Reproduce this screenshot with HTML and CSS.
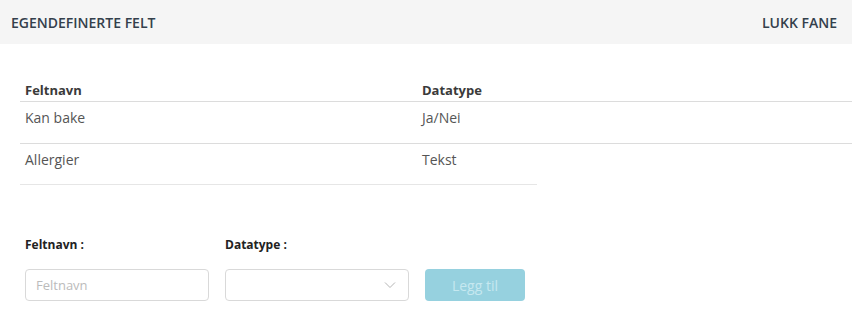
FILE: index.html
```html
<!DOCTYPE html>
<html lang="no">
<head>
  <meta charset="UTF-8" />
  <title>Egendefinerte felt</title>
  <link rel="stylesheet" href="styles.css">
</head>
<body>

<header class="tab-header">
  <div class="tab-title">EGENDEFINERTE FELT</div>
  <a class="close-tab" href="#">LUKK FANE</a>
</header>

<section class="field-table">
  <div class="row head">
    <div class="cell name">Feltnavn</div>
    <div class="cell type">Datatype</div>
  </div>
  <div class="row">
    <div class="cell name">Kan bake</div>
    <div class="cell type">Ja/Nei</div>
  </div>
  <div class="row last">
    <div class="cell name">Allergier</div>
    <div class="cell type">Tekst</div>
  </div>
  <div class="table-end"></div>
</section>

<!-- New field -->
<form class="new-field" onsubmit="return false">
  <div class="form-group">
    <label for="fieldName">Feltnavn :</label>
    <input type="text" id="fieldName" placeholder="Feltnavn" />
  </div>
  <div class="form-group">
    <label for="fieldType">Datatype :</label>
    <div class="select-wrap">
      <select id="fieldType">
        <option></option>
        <option>Tekst</option>
        <option>Ja/Nei</option>
      </select>
      <svg class="chevron" width="12" height="8" viewBox="0 0 12 8"><path d="M1 1.5 L6 6.5 L11 1.5" fill="none" stroke="#b5b5b5" stroke-width="1"/></svg>
    </div>
  </div>
  <div class="form-group">
    <button type="submit" disabled>Legg til</button>
  </div>
</form>

</body>
</html>
```

FILE: styles.css
```css
* {
  box-sizing: border-box;
}

body {
  margin: 0;
  font-family: 'Open Sans', sans-serif;
  background: #fff;
  color: #555;
}

.tab-header {
  height: 44px;
  background: #f5f5f5;
  display: flex;
  justify-content: space-between;
  align-items: center;
  padding: 0 15px 0 11px;
}

.tab-title,
.close-tab {
  font-size: 14px;
  font-weight: 600;
  color: #34404c;
  text-decoration: none;
}

.field-table {
  margin: 38px 0 0 20px;
}

.row {
  display: flex;
  border-bottom: 1px solid #dcdcdc;
  height: 42px;
  padding: 6px 0 0 5px;
  font-size: 14px;
  line-height: 20px;
}

.row.head {
  height: 20px;
  padding-top: 0;
  font-size: 13px;
  font-weight: 700;
  color: #3a3a3a;
  line-height: 17px;
}

.row.last {
  border-bottom: none;
  height: 40px;
}

.cell.name {
  width: 397px;
}

.table-end {
  width: 517px;
  border-top: 1px solid #e6e6e6;
}

.new-field {
  display: flex;
  gap: 16px;
  margin: 52px 0 0 25px;
}

.form-group {
  display: flex;
  flex-direction: column;
  justify-content: flex-end;
}

.form-group label {
  font-size: 12px;
  font-weight: 700;
  color: #222;
  line-height: 16px;
  margin-bottom: 16px;
}

.form-group input,
.form-group select {
  width: 184px;
  height: 32px;
  border: 1px solid #d9d9d9;
  border-radius: 4px;
  padding: 0 10px;
  font-family: inherit;
  font-size: 13px;
  color: #555;
  background: #fff;
  outline: none;
}

.form-group input::placeholder {
  color: #bbb;
}

.form-group select {
  appearance: none;
  -webkit-appearance: none;
}

.select-wrap {
  position: relative;
}

.chevron {
  position: absolute;
  right: 13px;
  top: 12px;
  pointer-events: none;
}

.form-group button {
  width: 100px;
  height: 32px;
  border: none;
  border-radius: 4px;
  background: #96d1df;
  color: #c6e8f0;
  font-family: inherit;
  font-size: 14px;
}
```
